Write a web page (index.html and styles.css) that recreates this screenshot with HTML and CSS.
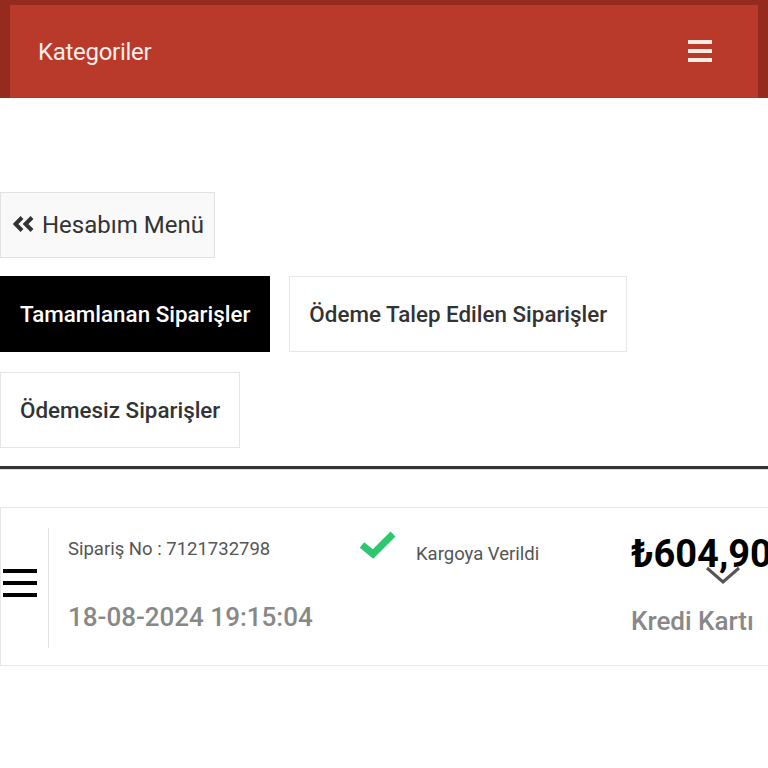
FILE: index.html
```html
<!DOCTYPE html>
<html lang="tr">
<head>
  <meta charset="UTF-8">
  <meta name="viewport" content="width=device-width, initial-scale=1.0">
  <title>Siparişlerim</title>
  <link rel="stylesheet" href="styles.css">
</head>
<body>
  <!-- üst kategori bar -->
  <header class="topbar">
    <span class="topbar-title">Kategoriler</span>
    <span class="topbar-burger">
      <i></i><i></i><i></i>
    </span>
  </header>

  <main class="page">
    <a class="back-button" href="#">
      <svg class="back-icon" viewBox="0 0 22 16" width="22" height="16">
        <polyline points="9,1.5 2.5,8 9,14.5" />
        <polyline points="19,1.5 12.5,8 19,14.5" />
      </svg>
      <span>Hesabım Menü</span>
    </a>

    <div class="tabs">
      <a class="tab active" href="#">Tamamlanan Siparişler</a>
      <a class="tab" href="#">Ödeme Talep Edilen Siparişler</a>
      <a class="tab" href="#">Ödemesiz Siparişler</a>
    </div>

    <hr class="divider">

    <!-- sipariş kartı -->
    <div class="order">
      <div class="order-toggle">
        <span class="order-burger"><i></i><i></i><i></i></span>
      </div>
      <div class="order-body">
        <div class="order-col">
          <div class="order-no">Sipariş No : 7121732798</div>
          <div class="order-date">18-08-2024 19:15:04</div>
        </div>
        <div class="order-status">
          <svg class="check" viewBox="0 0 40 30" width="40" height="30">
            <polyline points="4,16 15,25 35,5" />
          </svg>
          <span>Kargoya Verildi</span>
        </div>
        <div class="order-col order-price">
          <div class="price">₺604,90</div>
          <svg class="chevron" viewBox="0 0 36 20" width="36" height="20">
            <polyline points="2,3 18,17 34,3" />
          </svg>
          <div class="payment">Kredi Kartı</div>
        </div>
      </div>
    </div>
  </main>
</body>
</html>
```

FILE: styles.css
```css
* {
  box-sizing: border-box;
}

html, body {
  overflow-x: hidden;
}

body {
  margin: 0;
  background: #fff;
  font-family: Roboto, "Liberation Sans", sans-serif;
  color: #333;
}

a {
  text-decoration: none;
}

.topbar {
  display: flex;
  align-items: center;
  justify-content: space-between;
  height: 98px;
  padding: 0 46px 0 28px;
  background: #b9392a;
  border-top: 5px solid #952b1f;
  border-left: 10px solid #952b1f;
  border-right: 10px solid #952b1f;
}

.topbar-title {
  color: #fbeee8;
  font-size: 24px;
  letter-spacing: -0.3px;
}

.topbar-burger {
  display: flex;
  flex-direction: column;
  gap: 5px;
  width: 24px;
  margin-bottom: 2px;
}
.topbar-burger i {
  display: block;
  height: 4px;
  background: #f8ebe4;
}

.page {
  padding-top: 94px;
}

.back-button {
  display: inline-flex;
  align-items: center;
  gap: 7px;
  height: 66px;
  padding: 0 10px 0 12px;
  background: #f9f9f9;
  border: 1px solid #e2e2e2;
  color: #333;
  font-size: 24px;
}

.back-icon {
  fill: none;
  stroke: #333;
  stroke-width: 4;
  margin-top: -3px;
}

.tabs {
  display: flex;
  flex-wrap: wrap;
  gap: 20px 19px;
  margin-top: 18px;
}

.tab {
  display: flex;
  align-items: center;
  height: 76px;
  padding: 0 19px;
  border: 1px solid #e6e6e6;
  background: #fff;
  color: #333;
  font-size: 22.4px;
  font-weight: 500;
}
.tab.active {
  background: #000;
  border-color: #000;
  color: #fff;
}

.divider {
  margin: 18px 0 0;
  border: 0;
  border-top: 3px solid #333;
  border-bottom: 1px solid #ddd;
}

.order {
  display: flex;
  margin-top: 37px;
  height: 159px;
  padding: 20px 0 17px;
  border: 1px solid #e6e6e6;
  border-right: 0;
}

.order-toggle {
  display: flex;
  align-items: center;
  flex-shrink: 0;
  width: 48px;
  padding: 0 0 10px 2px;
  border-right: 1px solid #e2e2e2;
}

.order-burger {
  display: flex;
  flex-direction: column;
  gap: 8px;
  width: 34px;
}
.order-burger i {
  display: block;
  height: 4px;
  background: #000;
}

.order-body {
  display: grid;
  grid-template-columns: 290px 273px 160px;
  padding-left: 19px;
  flex: 1;
  min-width: 0;
}

.order-col {
  display: flex;
  flex-direction: column;
}

.order-no {
  margin-top: 10px;
  font-size: 18.5px;
  color: #555;
}

.order-date {
  margin-top: 42px;
  font-size: 26px;
  font-weight: 500;
  color: #888;
}

.order-status {
  display: flex;
  align-items: flex-start;
  gap: 18px;
}
.order-status span {
  margin-top: 15px;
  font-size: 18.5px;
  color: #555;
}

.check {
  margin-top: 1px;
  fill: none;
  stroke: #2ec770;
  stroke-width: 7;
}

.order-price {
  position: relative;
}

.price {
  margin-top: 4px;
  font-size: 38px;
  font-weight: 700;
  color: #000;
  white-space: nowrap;
}

.chevron {
  position: absolute;
  left: 74px;
  top: 37px;
  fill: none;
  stroke: #555;
  stroke-width: 3;
}

.payment {
  margin-top: 30px;
  font-size: 26px;
  font-weight: 500;
  color: #888;
}
```
